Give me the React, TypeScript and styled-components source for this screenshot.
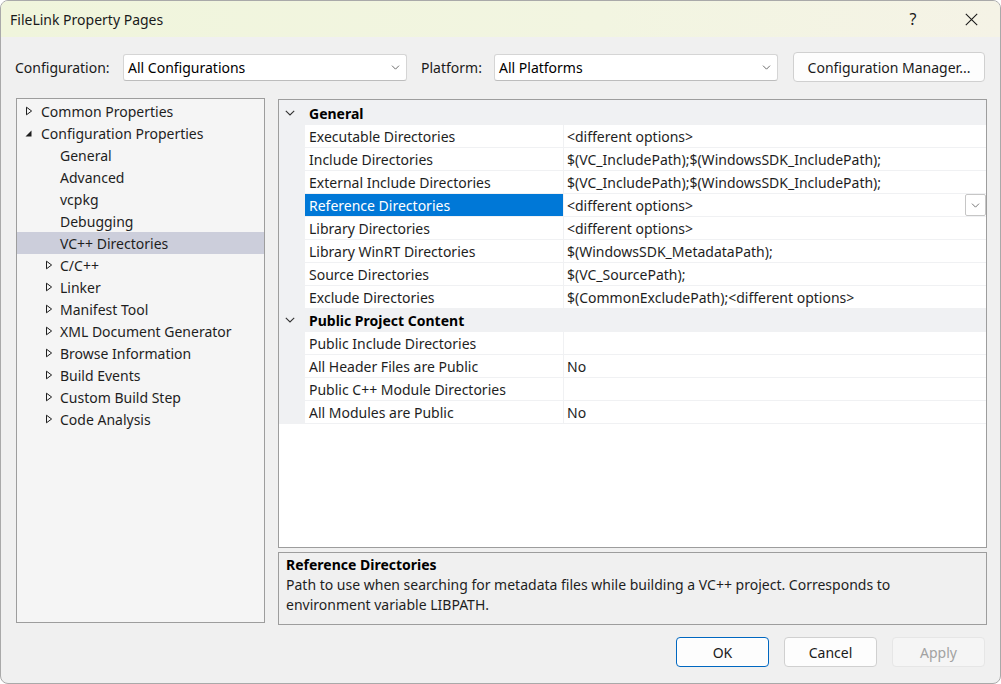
import React from "react";
import styled, { createGlobalStyle } from "styled-components";

const FONT = `"Noto Sans", "Open Sans", "DejaVu Sans", sans-serif`;

const GlobalStyle = createGlobalStyle`
  html, body { margin: 0; padding: 0; background: #ffffff; }
  body { font-family: ${FONT}; font-size: 14px; color: #000000; }
  * { box-sizing: border-box; }
`;

const Window = styled.div`
  width: 1001px;
  height: 684px;
  border: 1px solid #a9a9a9;
  border-radius: 8px;
  overflow: hidden;
  background: #f0f0f0;
  display: flex;
  flex-direction: column;
`;

const TitleBar = styled.div`
  height: 36px;
  flex: none;
  display: flex;
  align-items: center;
  padding-left: 9px;
  background: linear-gradient(90deg, #f0f5dc 0%, #f2f5e1 60%, #f5f3e6 100%);
`;

const TitleText = styled.div`
  flex: 1;
  font-size: 14px;
  color: #1a1a1a;
`;

const CaptionButton = styled.div`
  width: 58px;
  height: 36px;
  display: flex;
  align-items: center;
  justify-content: center;
  color: #1a1a1a;
  font-size: 16px;
`;

const Body = styled.div`
  flex: 1;
  display: flex;
  flex-direction: column;
  padding: 0 13px 16px 15px;
`;

const TopRow = styled.div`
  margin: 15px 2px 0 -1px;
  height: 30px;
  display: flex;
  align-items: center;
`;

const FieldLabel = styled.div<{ $width: number; $gap?: number }>`
  width: ${(p) => p.$width}px;
  margin-left: ${(p) => p.$gap ?? 0}px;
  font-size: 14px;
  color: #1a1a1a;
`;

const Combo = styled.div`
  width: 284px;
  height: 27px;
  background: #ffffff;
  border: 1px solid #d5d5d5;
  border-bottom-color: #bdbdbd;
  border-radius: 3px;
  display: flex;
  align-items: center;
  padding: 0 6px 0 4px;
  font-size: 14px;
`;

const ComboText = styled.span`
  flex: 1;
`;

const PushButton = styled.div<{ $width: number; $variant?: "default" | "primary" | "disabled" }>`
  width: ${(p) => p.$width}px;
  height: 30px;
  display: flex;
  align-items: center;
  justify-content: center;
  border-radius: 4px;
  font-size: 14px;
  background: ${(p) => (p.$variant === "disabled" ? "#f5f5f5" : "#fdfdfd")};
  color: ${(p) => (p.$variant === "disabled" ? "#a2a2a2" : "#1a1a1a")};
  border: 1px solid
    ${(p) =>
      p.$variant === "primary" ? "#0067c0" : p.$variant === "disabled" ? "#e6e6e6" : "#d0d0d0"};
  ${(p) => (p.$variant === "primary" ? "box-shadow: inset 0 0 0 1px #ffffff;" : "")}
`;

const ManagerButton = styled(PushButton)`
  margin-left: auto;
`;

const Main = styled.div`
  margin-top: 16px;
  display: flex;
  align-items: flex-start;
  gap: 13px;
`;

const Tree = styled.div`
  width: 249px;
  height: 525px;
  border: 1px solid #9d9d9d;
  background: #f5f5f5;
  padding-top: 1px;
`;

const TreeRow = styled.div<{ $level: number; $selected?: boolean }>`
  height: 22px;
  display: flex;
  align-items: center;
  padding-left: ${(p) => 7 + p.$level * 19}px;
  background: ${(p) => (p.$selected ? "#cccedb" : "transparent")};
  color: #1e1e1e;
  font-size: 14px;
  white-space: nowrap;
`;

const Expander = styled.div<{ $offset: number }>`
  width: 17px;
  height: 22px;
  flex: none;
  display: flex;
  align-items: center;
  padding-left: ${(p) => p.$offset}px;
`;

const RightColumn = styled.div`
  flex: 1;
  margin-top: 1px;
  display: flex;
  flex-direction: column;
  gap: 4px;
`;

const Grid = styled.div`
  height: 449px;
  border: 1px solid #9d9d9d;
  background: #ffffff;
`;

const GridRows = styled.div`
  padding-top: 2px;
  background: #f0f1f3;
  display: flex;
  flex-direction: column;
  gap: 1px;
  padding-bottom: 1px;
`;

const GridRow = styled.div`
  height: 22px;
  display: grid;
  grid-template-columns: 25px 258px 1fr;
  column-gap: 1px;
`;

const Strip = styled.div`
  display: flex;
  align-items: center;
  justify-content: center;
  padding-right: 3px;
`;

const CategoryCell = styled.div`
  grid-column: 2 / 4;
  display: flex;
  align-items: center;
  padding-left: 4px;
  font-weight: 700;
  font-size: 14px;
`;

const NameCell = styled.div<{ $selected?: boolean }>`
  display: flex;
  align-items: center;
  padding-left: 4px;
  background: ${(p) => (p.$selected ? "#0078d7" : "#ffffff")};
  color: ${(p) => (p.$selected ? "#ffffff" : "#1e1e1e")};
  font-size: 14px;
  white-space: nowrap;
  overflow: hidden;
`;

const ValueCell = styled.div`
  display: flex;
  align-items: center;
  padding-left: 3px;
  background: #ffffff;
  color: #1e1e1e;
  font-size: 14px;
  white-space: nowrap;
  overflow: hidden;
`;

const ValueText = styled.span`
  flex: 1;
`;

const DropButton = styled.div`
  width: 21px;
  height: 22px;
  flex: none;
  border: 1px solid #c6c6c6;
  border-radius: 2px;
  background: #ffffff;
  display: flex;
  align-items: center;
  justify-content: center;
`;

const Description = styled.div`
  height: 73px;
  border: 1px solid #9d9d9d;
  background: #f0f0f0;
  padding: 2px 7px 0 7px;
  font-size: 14px;
  line-height: 20px;
  color: #1e1e1e;
`;

const DescriptionTitle = styled.div`
  font-weight: 700;
  color: #000000;
`;

const ButtonRow = styled.div`
  margin-top: 12px;
  display: flex;
  justify-content: flex-end;
  gap: 15px;
  padding-right: 2px;
`;

const Chevron = ({ color = "#5f5f5f", size = 9 }: { color?: string; size?: number }) => (
  <svg width={size} height={Math.round(size * 0.6)} viewBox="0 0 10 6" fill="none">
    <path d="M0.8 0.8 L5 5 L9.2 0.8" stroke={color} strokeWidth="1.1" />
  </svg>
);

const Collapsed = () => (
  <svg width="8" height="10" viewBox="0 0 8 10">
    <path d="M1.5 1.2 L6.6 5 L1.5 8.8 Z" fill="none" stroke="#1e1e1e" strokeWidth="1" strokeLinejoin="miter" />
  </svg>
);

const Expanded = () => (
  <svg width="8" height="10" viewBox="0 0 8 10">
    <path d="M6.5 2.5 L6.5 8.5 L0.5 8.5 Z" fill="#1e1e1e" />
  </svg>
);

const CloseGlyph = () => (
  <svg width="13" height="13" viewBox="0 0 13 13">
    <path d="M0.8 0.8 L12.2 12.2 M12.2 0.8 L0.8 12.2" stroke="#1a1a1a" strokeWidth="1.1" />
  </svg>
);

type TreeItem = { label: string; level: number; state?: "collapsed" | "expanded"; selected?: boolean };

const treeItems: TreeItem[] = [
  { label: "Common Properties", level: 0, state: "collapsed" },
  { label: "Configuration Properties", level: 0, state: "expanded" },
  { label: "General", level: 1 },
  { label: "Advanced", level: 1 },
  { label: "vcpkg", level: 1 },
  { label: "Debugging", level: 1 },
  { label: "VC++ Directories", level: 1, selected: true },
  { label: "C/C++", level: 1, state: "collapsed" },
  { label: "Linker", level: 1, state: "collapsed" },
  { label: "Manifest Tool", level: 1, state: "collapsed" },
  { label: "XML Document Generator", level: 1, state: "collapsed" },
  { label: "Browse Information", level: 1, state: "collapsed" },
  { label: "Build Events", level: 1, state: "collapsed" },
  { label: "Custom Build Step", level: 1, state: "collapsed" },
  { label: "Code Analysis", level: 1, state: "collapsed" },
];

type Property = { name: string; value: string; selected?: boolean };
type Category = { title: string; items: Property[] };

const categories: Category[] = [
  {
    title: "General",
    items: [
      { name: "Executable Directories", value: "<different options>" },
      { name: "Include Directories", value: "$(VC_IncludePath);$(WindowsSDK_IncludePath);" },
      { name: "External Include Directories", value: "$(VC_IncludePath);$(WindowsSDK_IncludePath);" },
      { name: "Reference Directories", value: "<different options>", selected: true },
      { name: "Library Directories", value: "<different options>" },
      { name: "Library WinRT Directories", value: "$(WindowsSDK_MetadataPath);" },
      { name: "Source Directories", value: "$(VC_SourcePath);" },
      { name: "Exclude Directories", value: "$(CommonExcludePath);<different options>" },
    ],
  },
  {
    title: "Public Project Content",
    items: [
      { name: "Public Include Directories", value: "" },
      { name: "All Header Files are Public", value: "No" },
      { name: "Public C++ Module Directories", value: "" },
      { name: "All Modules are Public", value: "No" },
    ],
  },
];

export default function App() {
  return (
    <>
      <GlobalStyle />
      <Window>
        <TitleBar>
          <TitleText>FileLink Property Pages</TitleText>
          <CaptionButton>?</CaptionButton>
          <CaptionButton>
            <CloseGlyph />
          </CaptionButton>
        </TitleBar>
        <Body>
          <TopRow>
            <FieldLabel $width={108}>Configuration:</FieldLabel>
            <Combo>
              <ComboText>All Configurations</ComboText>
              <Chevron />
            </Combo>
            <FieldLabel $width={73} $gap={14}>
              Platform:
            </FieldLabel>
            <Combo>
              <ComboText>All Platforms</ComboText>
              <Chevron />
            </Combo>
            <ManagerButton $width={192}>Configuration Manager...</ManagerButton>
          </TopRow>
          <Main>
            <Tree>
              {treeItems.map((item) => (
                <TreeRow key={item.label} $level={item.level} $selected={item.selected}>
                  <Expander $offset={item.level === 0 ? 1 : 2}>
                    {item.state === "collapsed" && <Collapsed />}
                    {item.state === "expanded" && <Expanded />}
                  </Expander>
                  {item.label}
                </TreeRow>
              ))}
            </Tree>
            <RightColumn>
              <Grid>
                <GridRows>
                  {categories.map((cat) => (
                    <React.Fragment key={cat.title}>
                      <GridRow>
                        <Strip>
                          <Chevron color="#333333" size={10} />
                        </Strip>
                        <CategoryCell>{cat.title}</CategoryCell>
                      </GridRow>
                      {cat.items.map((prop) => (
                        <GridRow key={prop.name}>
                          <Strip />
                          <NameCell $selected={prop.selected}>{prop.name}</NameCell>
                          <ValueCell>
                            <ValueText>{prop.value}</ValueText>
                            {prop.selected && (
                              <DropButton>
                                <Chevron color="#6a6a6a" size={9} />
                              </DropButton>
                            )}
                          </ValueCell>
                        </GridRow>
                      ))}
                    </React.Fragment>
                  ))}
                </GridRows>
              </Grid>
              <Description>
                <DescriptionTitle>Reference Directories</DescriptionTitle>
                Path to use when searching for metadata files while building a VC++ project. Corresponds to
                <br />
                environment variable LIBPATH.
              </Description>
            </RightColumn>
          </Main>
          <ButtonRow>
            <PushButton $width={93} $variant="primary">
              OK
            </PushButton>
            <PushButton $width={93}>Cancel</PushButton>
            <PushButton $width={93} $variant="disabled">
              Apply
            </PushButton>
          </ButtonRow>
        </Body>
      </Window>
    </>
  );
}
